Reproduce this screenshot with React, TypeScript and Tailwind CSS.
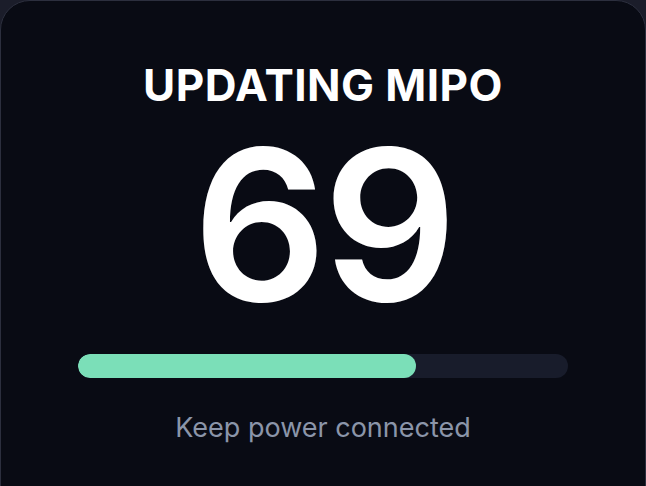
export default function App() {
  const progress = 69

  return (
    <div className="h-[486px] w-[646px] overflow-hidden bg-[#1b1d2a]" style={{ fontFamily: 'Inter, "Noto Sans", sans-serif' }}>
      <div className="flex h-[520px] flex-col items-center rounded-[30px] border border-[#2c2f3e] bg-[#090b14] px-[77px] pt-[62px]">
        <h1 className="text-[44px] leading-[44px] font-bold tracking-[0.01em] text-white">UPDATING MIPO</h1>
        <div className="mt-[18px] text-[210px] leading-[200px] font-semibold tracking-[-0.02em] text-white">{progress}</div>
        <div className="mt-[29px] h-6 w-full overflow-hidden rounded-full bg-[#181c2b]">
          <div className="h-full rounded-full bg-[#7bdfb8]" style={{ width: `${progress}%` }} />
        </div>
        <p className="mt-[34px] text-[27px] leading-8 text-[#8b95a9]">Keep power connected</p>
      </div>
    </div>
  )
}
